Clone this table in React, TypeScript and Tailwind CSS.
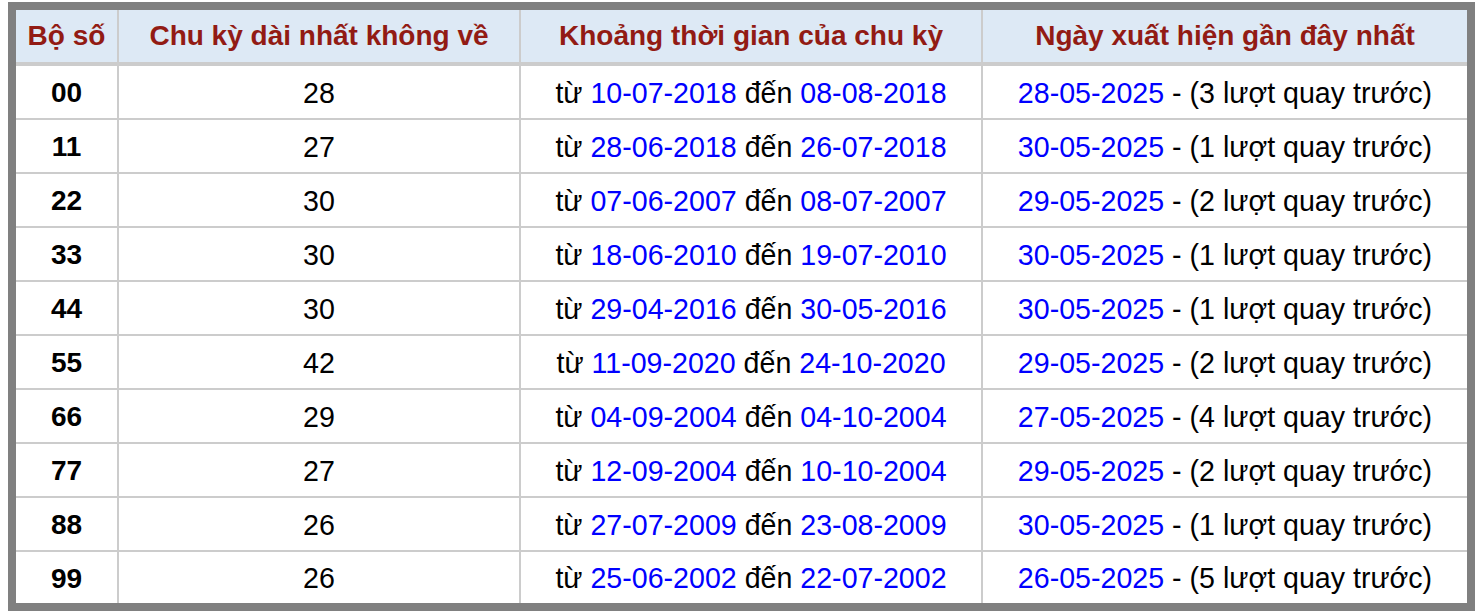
interface Row {
  num: string
  gap: number
  from: string
  to: string
  last: string
  turns: number
}

const rows: Row[] = [
  { num: '00', gap: 28, from: '10-07-2018', to: '08-08-2018', last: '28-05-2025', turns: 3 },
  { num: '11', gap: 27, from: '28-06-2018', to: '26-07-2018', last: '30-05-2025', turns: 1 },
  { num: '22', gap: 30, from: '07-06-2007', to: '08-07-2007', last: '29-05-2025', turns: 2 },
  { num: '33', gap: 30, from: '18-06-2010', to: '19-07-2010', last: '30-05-2025', turns: 1 },
  { num: '44', gap: 30, from: '29-04-2016', to: '30-05-2016', last: '30-05-2025', turns: 1 },
  { num: '55', gap: 42, from: '11-09-2020', to: '24-10-2020', last: '29-05-2025', turns: 2 },
  { num: '66', gap: 29, from: '04-09-2004', to: '04-10-2004', last: '27-05-2025', turns: 4 },
  { num: '77', gap: 27, from: '12-09-2004', to: '10-10-2004', last: '29-05-2025', turns: 2 },
  { num: '88', gap: 26, from: '27-07-2009', to: '23-08-2009', last: '30-05-2025', turns: 1 },
  { num: '99', gap: 26, from: '25-06-2002', to: '22-07-2002', last: '26-05-2025', turns: 5 },
]

const headers = ['Bộ số', 'Chu kỳ dài nhất không về', 'Khoảng thời gian của chu kỳ', 'Ngày xuất hiện gần đây nhất']

export default function App() {
  return (
    <div className="bg-white w-[1480px] h-[612px] pt-[2px] pl-[8px] font-['Liberation_Sans',Arial,sans-serif] text-[28.6px] text-black">
      <div className="w-[1467px] border-8 border-[#808080] bg-white grid grid-cols-[103px_402px_462px_484px]">
        {headers.map((h, i) => (
          <div
            key={h}
            className={`h-[56px] flex items-center justify-center bg-[#dde9f5] border-b-4 border-[#cccccc] font-bold text-[28px] text-[#921b14] ${i < 3 ? 'border-r-2' : ''}`}
          >
            {h}
          </div>
        ))}
        {rows.map((r, idx) => {
          const isLast = idx === rows.length - 1
          const rowCls = isLast ? 'h-[51px] pt-[2px]' : 'h-[54px] pt-[2px] border-b-2'
          return (
            <div key={r.num} className="contents">
              <div className={`${rowCls} border-r-2 border-[#cccccc] flex items-center justify-center font-bold text-[28px]`}>
                {r.num}
              </div>
              <div className={`${rowCls} border-r-2 border-[#cccccc] flex items-center justify-center`}>
                {r.gap}
              </div>
              <div className={`${rowCls} border-r-2 border-[#cccccc] flex items-center justify-center whitespace-pre`}>
                <span>từ </span>
                <span className="text-[#0000ff]">{r.from}</span>
                <span> đến </span>
                <span className="text-[#0000ff]">{r.to}</span>
              </div>
              <div className={`${rowCls} border-[#cccccc] flex items-center justify-center whitespace-pre`}>
                <span className="text-[#0000ff]">{r.last}</span>
                <span> - ({r.turns} lượt quay trước)</span>
              </div>
            </div>
          )
        })}
      </div>
    </div>
  )
}
